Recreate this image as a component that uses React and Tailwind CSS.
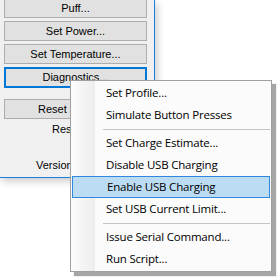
import React from "react";

const btn =
  "h-[20px] w-[143px] ml-[4px] border border-[#adadad] bg-[#e1e1e1] text-[11px] leading-[18px] text-black text-center";

const items = [
  { t: "Set Profile..." },
  { t: "Simulate Button Presses" },
  { sep: true },
  { t: "Set Charge Estimate..." },
  { t: "Disable USB Charging" },
  { t: "Enable USB Charging", hl: true },
  { t: "Set USB Current Limit..." },
  { sep: true },
  { t: "Issue Serial Command..." },
  { t: "Run Script..." },
];

export default function App() {
  return (
    <div
      className="relative w-[277px] h-[279px] bg-white overflow-hidden"
      style={{ fontFamily: '"Liberation Sans", Arial, sans-serif' }}
    >
      <div className="w-[155px] h-[178px] bg-[#f0f0f0] border-r border-b border-[#1a7fdc] shadow-[2px_3px_8px_rgba(0,0,0,0.22)] overflow-hidden">
        <div className="-mt-[2px] flex flex-col gap-[3px]">
          <div className={btn}>Puff...</div>
          <div className={btn}>Set Power...</div>
          <div className={btn}>Set Temperature...</div>
          <div className="h-[21px] w-[143px] ml-[4px] border-2 border-[#0078d7] bg-[#e1e1e1] text-[11px] leading-[17px] text-black text-center">
            Diagnostics...
          </div>
        </div>
        <div className="mt-[11px] h-[20px] w-[143px] ml-[4px] border border-[#adadad] bg-[#e1e1e1] text-[11px] leading-[18px] text-black pl-[33px] whitespace-nowrap">
          Reset Statistics
        </div>
        <div className="mt-[3px] text-[11px] leading-[14px] pl-[52px] whitespace-nowrap text-black">
          Resets: 0
        </div>
        <div className="mt-[22px] text-[11px] leading-[14px] pl-[36px] whitespace-nowrap text-black">
          Version: 1.0.0
        </div>
      </div>

      <div
        className="absolute left-[70px] top-[80px] w-[202px] h-[192px] border border-[#a0a0a0] bg-[#fbfbfb] shadow-[4px_4px_1px_rgba(0,0,0,0.35)] py-[1px]"
        style={{ fontFamily: '"Open Sans", "Noto Sans", sans-serif' }}
      >
        <div className="absolute left-0 top-0 bottom-0 w-[24px] bg-gradient-to-r from-[#fcfcfc] to-[#ececec]" />
        <div className="relative flex flex-col">
          {items.map((it, i) =>
            it.sep ? (
              <div key={i} className="h-[6px] flex items-center pl-[32px] pr-[1px]">
                <div className="h-[1px] w-full bg-[#c5c5c5]" />
              </div>
            ) : (
              <div
                key={i}
                className={
                  "h-[22px] mx-[1px] flex items-center pl-[34px] text-[11.5px] tracking-[-0.2px] text-black whitespace-nowrap " +
                  (it.hl ? "bg-[#bcdcf4] border border-[#3087e0] pl-[33px]" : "")
                }
              >
                {it.t}
              </div>
            )
          )}
        </div>
      </div>
    </div>
  );
}
